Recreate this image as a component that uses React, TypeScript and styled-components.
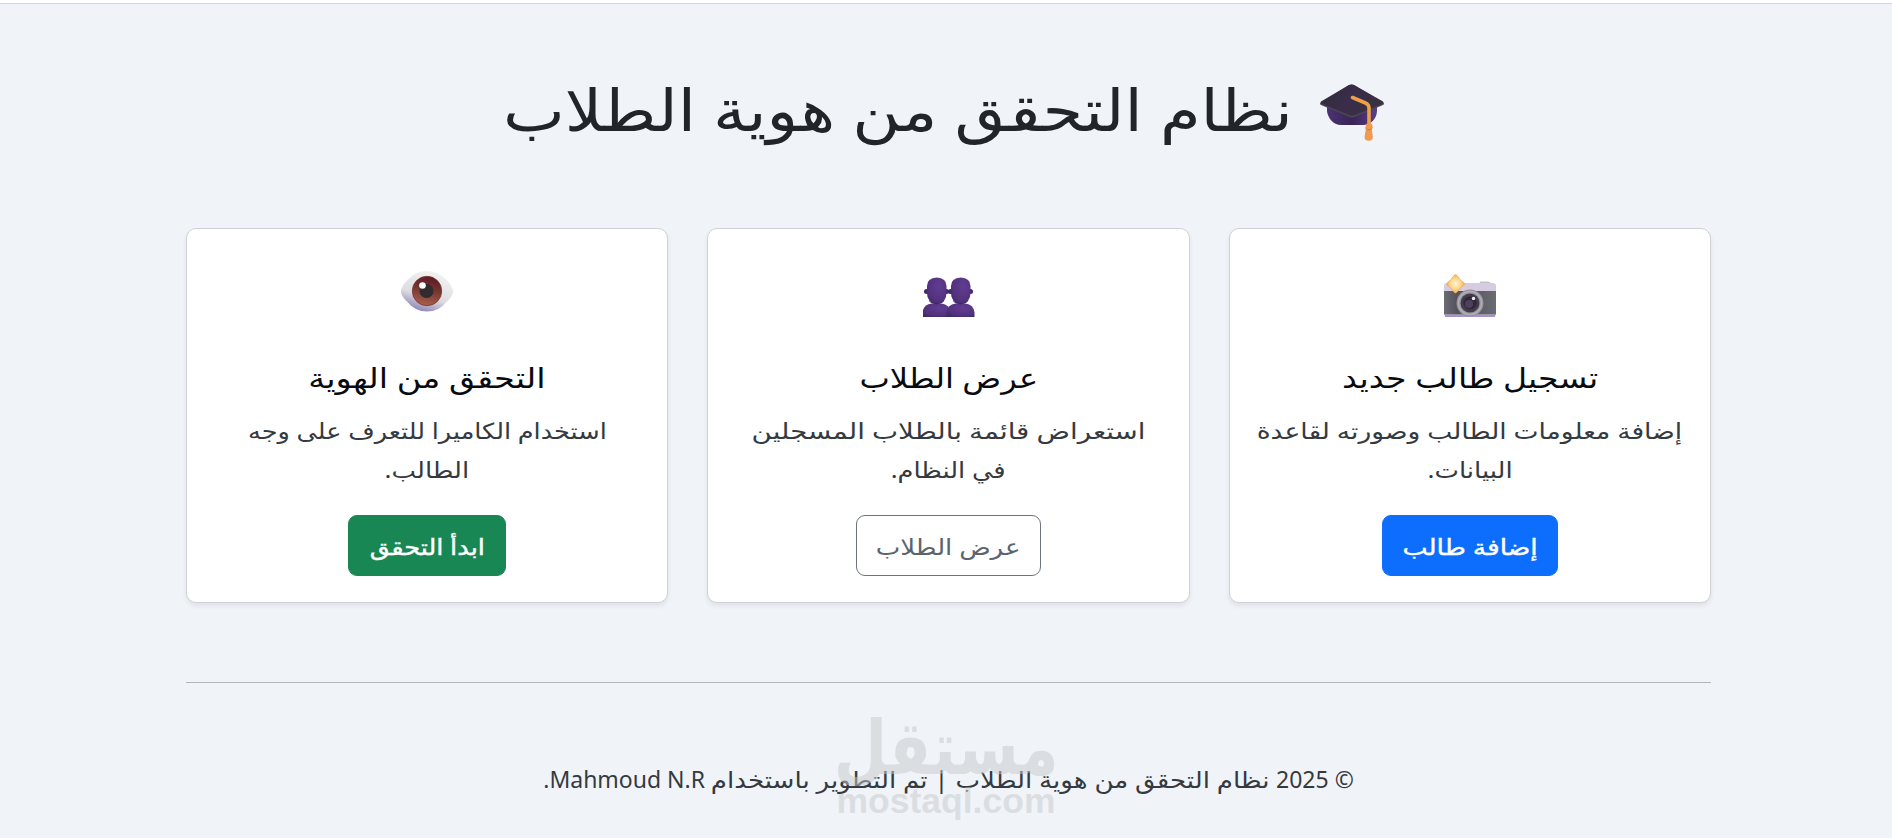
import type { ReactNode } from 'react';
import styled, { createGlobalStyle, css } from 'styled-components';

const GlobalStyle = createGlobalStyle`
  * {
    box-sizing: border-box;
  }
  body {
    margin: 0;
    background: #f0f4f8;
    color: #212529;
    font-family: 'Noto Sans', 'DejaVu Sans', sans-serif;
    overflow: hidden;
  }
`;

const Page = styled.div`
  position: relative;
  height: 838px;
  border-top: 3px solid #fff;
  box-shadow: inset 0 1px 0 #d3d5d8;
  padding: 0 181px 0 186px;
`;

// widens the arabic letters without changing their height
const Wide = styled.span<{ $ratio: number }>`
  display: inline-block;
  white-space: nowrap;
  transform: scaleX(${({ $ratio }) => $ratio});
`;

const Header = styled.header`
  display: flex;
  justify-content: center;
  align-items: center;
  gap: 30px;
  height: 225px;
  padding: 0 8px 6px 0;
`;

const Title = styled.h1`
  display: flex;
  justify-content: center;
  width: 785px;
  margin: 0 0 8px;
  font-size: 58px;
  font-weight: 400;
  line-height: 68px;
`;

const Cards = styled.main`
  display: grid;
  grid-template-columns: repeat(3, 1fr);
  gap: 39px;
`;

const Card = styled.section`
  display: flex;
  flex-direction: column;
  align-items: center;
  height: 375px;
  padding: 30px 0 0;
  background: #fff;
  border: 1px solid #d0d3d6;
  border-radius: 10px;
  box-shadow: 0 3px 5px rgba(0, 0, 0, 0.075);
`;

const IconBox = styled.div`
  display: flex;
  height: 76px;
  margin-bottom: 26px;
`;

const CardTitle = styled.h5`
  margin: 0 0 18px;
  color: #080b10;
  font-size: 28px;
  font-weight: 400;
  line-height: 32px;
`;

const CardText = styled.p`
  display: flex;
  flex-direction: column;
  align-items: center;
  margin: 0 0 26px;
  color: #343a40;
  font-size: 22px;
  line-height: 39px;
`;

type Variant = 'primary' | 'outline' | 'success';

const variants = {
  primary: css`
    background: #0d6efd;
    border-color: #0d6efd;
    color: #fff;
    -webkit-text-stroke: 0.4px #fff;
  `,
  outline: css`
    background: #fff;
    border-color: #6c757d;
    color: #5a646e;
  `,
  success: css`
    background: #198754;
    border-color: #198754;
    color: #fff;
    -webkit-text-stroke: 0.4px #fff;
  `,
};

const Button = styled.button<{ $variant: Variant; $width: number }>`
  width: ${({ $width }) => $width}px;
  height: 61px;
  padding: 0;
  border: 1px solid;
  border-radius: 9px;
  font-family: inherit;
  font-size: 22px;
  line-height: 38px;
  ${({ $variant }) => variants[$variant]}
`;

const Divider = styled.hr`
  height: 1px;
  margin: 79px 0 0;
  border: 0;
  background: #b2b6ba;
`;

const Footer = styled.footer`
  display: flex;
  justify-content: center;
  padding-top: 77px;
  color: #343a40;
  font-size: 23px;
  line-height: 38px;
  white-space: nowrap;
`;

const FooterText = styled.span`
  display: flex;
  justify-content: center;
  width: 571px;
`;

const Watermark = styled.div`
  position: absolute;
  left: 836px;
  top: 710px;
  width: 220px;
  display: flex;
  flex-direction: column;
  align-items: center;
  color: #c8cacc;
  opacity: 0.5;
  font-weight: 700;
  white-space: nowrap;
  pointer-events: none;
`;

const WatermarkName = styled.span`
  font-family: 'DejaVu Sans', sans-serif;
  font-size: 75px;
  line-height: 70px;
`;

const WatermarkDomain = styled.span`
  font-family: 'Liberation Sans', sans-serif;
  font-size: 35.5px;
  line-height: 36px;
`;

const CapIcon = () => (
  <svg width='64' height='58' viewBox='0 0 64 58'>
    <defs>
      <linearGradient id='capTop' x1='0' y1='0' x2='1' y2='0.4'>
        <stop offset='0' stopColor='#312c3a' />
        <stop offset='0.6' stopColor='#3a2d4b' />
        <stop offset='1' stopColor='#38313f' />
      </linearGradient>
      <linearGradient id='capBase' x1='0' y1='0' x2='1' y2='0'>
        <stop offset='0' stopColor='#4b3473' />
        <stop offset='0.5' stopColor='#382455' />
        <stop offset='1' stopColor='#5c3e8e' />
      </linearGradient>
    </defs>
    <path d='M7 20v7c1 8 7 14 14 14h22c8 0 14-7 14-14v-7z' fill='url(#capBase)' />
    <path d='M1 18.500q-2 1 0 2.500l28 12q3 1 6 0l28-12q2-1.500 0-2.500L34 1q-2-1-5 0z' fill='#4b4553' />
    <path d='M1 17.500q-1 1 0 2l28 11.500q3 1 6 0l28-11.500q1-1 0-2L34 1q-2-1-5 0z' fill='url(#capTop)' />
    <path d='M32.500 13.500 45.500 19q3.500 1.500 3.500 5v18' fill='none' stroke='#eda046' strokeWidth='3.600' strokeLinecap='round' />
    <path d='M46 41.500q0-2.500 3-2.500t3.500 3q1 1.500-.7 3.500l1 7q.5 4-4 4.300-4.500-.2-4.300-4l1.300-7q-1.300-2 .2-4.300z' fill='#ee9a50' />
    <path d='M46.500 45q2.500 1.500 5 0' fill='none' stroke='#cf743c' strokeWidth='0.900' />
  </svg>
);

const CameraIcon = () => (
  <svg width='52' height='76' viewBox='0 0 52 76'>
    <defs>
      <linearGradient id='camBody' x1='0' y1='0' x2='1' y2='0'>
        <stop offset='0' stopColor='#6b6c73' />
        <stop offset='0.250' stopColor='#54515d' />
        <stop offset='0.750' stopColor='#606168' />
        <stop offset='1' stopColor='#6c6d73' />
      </linearGradient>
      <radialGradient id='spark'>
        <stop offset='0' stopColor='#fff4cf' />
        <stop offset='0.600' stopColor='#fbd58f' />
        <stop offset='1' stopColor='#f6b04d' />
      </radialGradient>
    </defs>
    <rect x='35' y='23.500' width='12' height='4' rx='1.500' fill='#73777c' />
    <rect x='36' y='22.500' width='9' height='1.500' rx='0.700' fill='#c3c3c6' />
    <rect y='24' width='52' height='34' rx='3' fill='#d5cce2' />
    <rect y='32' width='52' height='23.500' fill='url(#camBody)' />
    <path d='M1 57h50' stroke='#aa91ce' strokeWidth='2' />
    <circle cx='26' cy='44' r='13.500' fill='#96939c' />
    <circle cx='26' cy='44' r='11.500' fill='none' stroke='#b1afb5' strokeWidth='1.500' />
    <circle cx='26' cy='44' r='9.500' fill='#413b4b' />
    <circle cx='26' cy='44' r='6.500' fill='#302738' />
    <circle cx='25' cy='45' r='4' fill='#4d405d' />
    <circle cx='29.500' cy='39.500' r='1.700' fill='#f4edff' />
    <path d='M10 16.500q1.500-2 3 0 3 5 6.500 7 2 1.500 0 3-3.500 2-6.500 6.500-1.500 2-3 0-3-4.500-6.500-6.500-2-1.500 0-3 3.500-2 6.500-7z' fill='url(#spark)' stroke='#f0ab52' strokeWidth='0.800' />
  </svg>
);

const PeopleIcon = () => (
  <svg width='52' height='76' viewBox='0 0 52 76'>
    <defs>
      <radialGradient id='bust' cx='0.600' cy='0.350' r='0.750'>
        <stop offset='0' stopColor='#613c90' />
        <stop offset='0.700' stopColor='#53327f' />
        <stop offset='1' stopColor='#412a64' />
      </radialGradient>
    </defs>
    {[0, 24].map((x) => (
      <g key={x} transform={`translate(${x - 0.5} 0)`}>
        <path d='M0 58v-4.500q1-8 9-9h10q8 1 9 9v4.500z' fill='url(#bust)' />
        <circle cx='4' cy='32.500' r='2.500' fill='#42276a' />
        <circle cx='24' cy='32.500' r='2.500' fill='#42276a' />
        <path d='M4.500 27q0-8 9.700-8.500 9.800.5 9.800 8.500v7q0 10-9.800 11-9.700-1-9.700-11z' fill='url(#bust)' />
        <path d='M7 42.500q7 4.500 14 0' fill='none' stroke='#38215c' strokeWidth='0.900' />
      </g>
    ))}
  </svg>
);

const EyeIcon = () => (
  <svg width='52' height='76' viewBox='0 0 52 76'>
    <defs>
      <linearGradient id='eyeBall' x1='0.650' y1='0' x2='0.250' y2='1'>
        <stop offset='0' stopColor='#f3f3f4' />
        <stop offset='0.600' stopColor='#dddde0' />
        <stop offset='1' stopColor='#857ab2' />
      </linearGradient>
      <linearGradient id='iris' x1='0.600' y1='0' x2='0.400' y2='1'>
        <stop offset='0' stopColor='#5c1728' />
        <stop offset='0.450' stopColor='#76362e' />
        <stop offset='1' stopColor='#a9604f' />
      </linearGradient>
    </defs>
    <path d='M0 32.500q0-5 6-11 8-9.500 20-9.500t20 9.500q6 6 6 11 0 4.500-6 10-8 10-20 10T6 42.500q-6-5.500-6-10z' fill='url(#eyeBall)' />
    <circle cx='26' cy='32' r='14.700' fill='url(#iris)' stroke='#78382f' strokeWidth='0.800' />
    <circle cx='25.500' cy='32' r='7' fill='#302b2f' />
    <circle cx='21.500' cy='26.500' r='3.300' fill='#fff' />
  </svg>
);

interface Label {
  text: string;
  ratio: number;
}

interface Item {
  icon: ReactNode;
  title: Label;
  lines: Label[];
  action: Label;
  variant: Variant;
  width: number;
}

const items: Item[] = [
  {
    icon: <CameraIcon />,
    title: { text: 'تسجيل طالب جديد', ratio: 1.184 },
    lines: [
      { text: 'إضافة معلومات الطالب وصورته لقاعدة', ratio: 1.206 },
      { text: 'البيانات.', ratio: 1.178 },
    ],
    action: { text: 'إضافة طالب', ratio: 1.207 },
    variant: 'primary',
    width: 176,
  },
  {
    icon: <PeopleIcon />,
    title: { text: 'عرض الطلاب', ratio: 1.148 },
    lines: [
      { text: 'استعراض قائمة بالطلاب المسجلين', ratio: 1.258 },
      { text: 'في النظام.', ratio: 1.17 },
    ],
    action: { text: 'عرض الطلاب', ratio: 1.184 },
    variant: 'outline',
    width: 185,
  },
  {
    icon: <EyeIcon />,
    title: { text: 'التحقق من الهوية', ratio: 1.2 },
    lines: [
      { text: 'استخدام الكاميرا للتعرف على وجه', ratio: 1.162 },
      { text: 'الطالب.', ratio: 1.18 },
    ],
    action: { text: 'ابدأ التحقق', ratio: 1.165 },
    variant: 'success',
    width: 158,
  },
];

const App = () => {
  return (
    <>
      <GlobalStyle />
      <Page dir='rtl'>
        <Header>
          <CapIcon />
          <Title>
            <Wide $ratio={1.132}>نظام التحقق من هوية الطلاب</Wide>
          </Title>
        </Header>
        <Cards>
          {items.map(({ icon, title, lines, action, variant, width }) => (
            <Card key={title.text}>
              <IconBox>{icon}</IconBox>
              <CardTitle>
                <Wide $ratio={title.ratio}>{title.text}</Wide>
              </CardTitle>
              <CardText>
                {lines.map((line) => (
                  <Wide key={line.text} $ratio={line.ratio}>
                    {line.text}
                  </Wide>
                ))}
              </CardText>
              <Button $variant={variant} $width={width}>
                <Wide $ratio={action.ratio}>{action.text}</Wide>
              </Button>
            </Card>
          ))}
        </Cards>
        <Divider />
        <Footer>
          <span>© 2025</span>
          <FooterText>
            <Wide $ratio={1.135}>نظام التحقق من هوية الطلاب | تم التطوير باستخدام</Wide>
          </FooterText>
          <span>Mahmoud N.R.</span>
        </Footer>
        <Watermark>
          <WatermarkName>
            <Wide $ratio={0.82}>مستقل</Wide>
          </WatermarkName>
          <WatermarkDomain>mostaql.com</WatermarkDomain>
        </Watermark>
      </Page>
    </>
  );
};

export default App;
